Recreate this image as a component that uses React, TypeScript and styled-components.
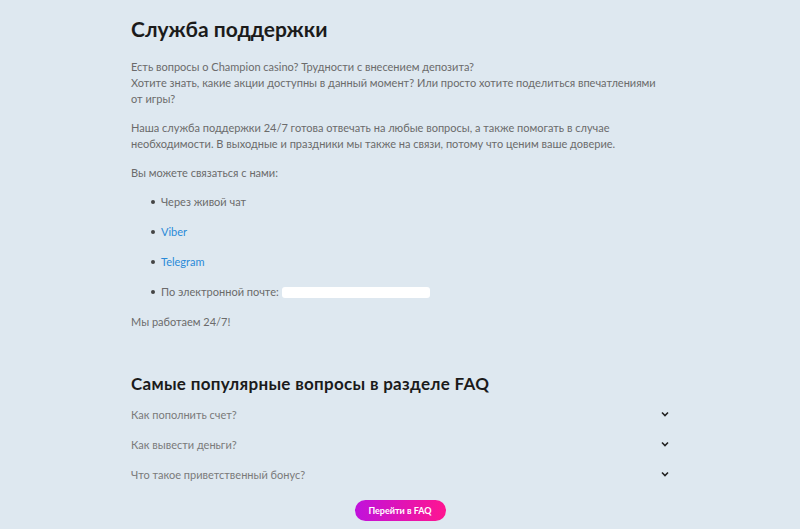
import React from 'react';
import styled, { createGlobalStyle } from 'styled-components';

const GlobalStyle = createGlobalStyle`
  html, body {
    margin: 0;
    padding: 0;
    background: #dee8f0;
    font-family: Lato, "Liberation Sans", sans-serif;
  }
`;

const Page = styled.div`
  display: flex;
  justify-content: center;
  min-height: 529px;
`;

const Content = styled.div`
  width: 538px;
  padding-top: 13px;
`;

const Title = styled.h1`
  margin: 0 0 14px;
  font-size: 21px;
  font-weight: 700;
  color: #1b1b1b;
  line-height: 32px;
`;

const Text = styled.p`
  margin: 0 0 13px;
  font-size: 11px;
  line-height: 16px;
  color: #6b6b6b;
`;

const List = styled.ul`
  list-style: none;
  margin: 0 0 14px;
  padding: 0 0 0 20px;
  display: flex;
  flex-direction: column;
  gap: 14px;
`;

const Item = styled.li`
  display: flex;
  align-items: center;
  font-size: 11px;
  line-height: 16px;
  color: #6b6b6b;

  &::before {
    content: '';
    width: 4px;
    height: 4px;
    border-radius: 50%;
    background: #444;
    margin-right: 6px;
  }
`;

const Link = styled.a`
  color: #2a8ad8;
  text-decoration: none;
`;

const EmailBox = styled.span`
  display: inline-block;
  width: 148px;
  height: 11px;
  margin-left: 3px;
  background: #fff;
  border-radius: 3px;
`;

const SubTitle = styled.h2`
  margin: 42px 0 3px;
  font-size: 17px;
  font-weight: 700;
  letter-spacing: 0.3px;
  color: #1b1b1b;
  line-height: 24px;
`;

const Faq = styled.div`
  display: flex;
  flex-direction: column;
`;

const FaqRow = styled.div`
  display: flex;
  align-items: center;
  justify-content: space-between;
  height: 30px;
  font-size: 11px;
  color: #7a7a7a;
`;

const ButtonRow = styled.div`
  display: flex;
  justify-content: center;
  margin-top: 11px;
`;

const Button = styled.button`
  border: none;
  border-radius: 11px;
  height: 21px;
  width: 91px;
  padding: 0;
  font-family: inherit;
  font-size: 9px;
  font-weight: 700;
  color: #fff;
  background: linear-gradient(90deg, #c012dc, #ff1590);
  cursor: pointer;
`;

const Chevron = () => (
  <svg width="8" height="6" viewBox="0 0 8 6">
    <path d="M1 1.5 L4 4.5 L7 1.5" fill="none" stroke="#222" strokeWidth="1.6" />
  </svg>
);

const questions = [
  'Как пополнить счет?',
  'Как вывести деньги?',
  'Что такое приветственный бонус?',
];

export default function App() {
  return (
    <Page>
      <GlobalStyle />
      <Content>
        <Title>Служба поддержки</Title>
        <Text>
          Есть вопросы о Champion casino? Трудности с внесением депозита?
          <br />
          Хотите знать, какие акции доступны в данный момент? Или просто хотите поделиться впечатлениями
          <br />
          от игры?
        </Text>
        <Text>
          Наша служба поддержки 24/7 готова отвечать на любые вопросы, а также помогать в случае
          <br />
          необходимости. В выходные и праздники мы также на связи, потому что ценим ваше доверие.
        </Text>
        <Text>Вы можете связаться с нами:</Text>
        <List>
          <Item>Через живой чат</Item>
          <Item><Link href="#">Viber</Link></Item>
          <Item><Link href="#">Telegram</Link></Item>
          <Item>По электронной почте: <EmailBox /></Item>
        </List>
        <Text>Мы работаем 24/7!</Text>
        <SubTitle>Самые популярные вопросы в разделе FAQ</SubTitle>
        <Faq>
          {questions.map((q) => (
            <FaqRow key={q}>
              {q}
              <Chevron />
            </FaqRow>
          ))}
        </Faq>
        <ButtonRow>
          <Button>Перейти в FAQ</Button>
        </ButtonRow>
      </Content>
    </Page>
  );
}
